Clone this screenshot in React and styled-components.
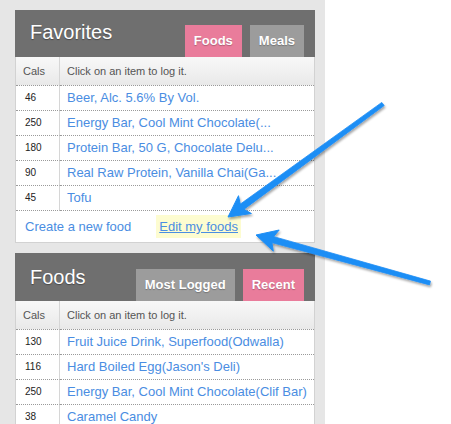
import React from "react";
import styled, { createGlobalStyle } from "styled-components";

const Global = createGlobalStyle`
  html, body { margin: 0; padding: 0; background: #ffffff; }
  body { font-family: "Liberation Sans", Arial, sans-serif; }
`;

const Page = styled.div`
  position: relative;
  width: 451px;
  height: 424px;
  overflow: hidden;
`;

const Sidebar = styled.div`
  width: 325px;
  height: 424px;
  box-sizing: border-box;
  background: #e6e6e6;
  padding: 10px 10px 0 15px;
  display: flex;
  flex-direction: column;
  gap: 10px;
`;

const Panel = styled.section`
  background: #ffffff;
  border: 1px solid #d2d2d2;
  border-top: none;
  display: flex;
  flex-direction: column;
`;

const Header = styled.div`
  background: #6f6f6f;
  height: ${(p) => p.$h}px;
  display: flex;
  align-items: flex-end;
  padding: 0 11px 0 15px;
  margin: 0 -1px;
`;

const Title = styled.h2`
  margin: 0;
  align-self: flex-start;
  margin-top: ${(p) => p.$top}px;
  font-size: 20px;
  font-weight: normal;
  color: #ffffff;
  text-shadow: 0 1px 1px rgba(0, 0, 0, 0.35);
  flex: 1;
`;

const Tabs = styled.div`
  display: flex;
  gap: 8px;
`;

const Tab = styled.div`
  height: 32px;
  line-height: 32px;
  padding: 0 ${(p) => p.$pad}px;
  background: ${(p) => (p.$active ? "#e97c9b" : "#9c9c9c")};
  color: #ffffff;
  font-size: 13px;
  font-weight: bold;
  text-shadow: 0 1px 1px rgba(0, 0, 0, 0.25);
`;

const Table = styled.div`
  display: grid;
  grid-template-columns: 44px 1fr;
`;

const HeadCell = styled.div`
  height: 28px;
  line-height: 28px;
  background: linear-gradient(#f8f8f8, #e9e9e9);
  border-bottom: 1px dotted #9a9a9a;
  border-right: ${(p) => (p.$first ? "1px solid #d6d6d6" : "none")};
  padding-left: 7px;
  font-size: 11px;
  color: #555555;
`;

const CalCell = styled.div`
  height: 24px;
  line-height: 24px;
  border-bottom: 1px dotted #9a9a9a;
  border-right: 1px solid #d6d6d6;
  padding-left: 9px;
  font-size: 10px;
  color: #222222;
`;

const NameCell = styled.a`
  display: block;
  height: 24px;
  line-height: 24px;
  border-bottom: 1px dotted #9a9a9a;
  padding-left: 7px;
  font-size: 13px;
  color: #4a8de2;
  text-decoration: none;
  white-space: nowrap;
  overflow: hidden;
`;

const Footer = styled.div`
  height: 31px;
  display: flex;
  align-items: center;
  padding-left: 9px;
  gap: 28px;
`;

const FootLink = styled.a`
  font-size: 13px;
  color: #4a8de2;
  text-decoration: ${(p) => (p.$hl ? "underline" : "none")};
  background: ${(p) => (p.$hl ? "#fdfcd0" : "transparent")};
  padding: ${(p) => (p.$hl ? "4px 3px" : "0")};
  margin-left: ${(p) => (p.$hl ? "-3px" : "0")};
`;

const Overlay = styled.svg`
  position: absolute;
  left: 0;
  top: 0;
  pointer-events: none;
`;

const favorites = [
  ["46", "Beer, Alc. 5.6% By Vol."],
  ["250", "Energy Bar, Cool Mint Chocolate(..."],
  ["180", "Protein Bar, 50 G, Chocolate Delu..."],
  ["90", "Real Raw Protein, Vanilla Chai(Ga..."],
  ["45", "Tofu"],
];

const foods = [
  ["130", "Fruit Juice Drink, Superfood(Odwalla)"],
  ["116", "Hard Boiled Egg(Jason's Deli)"],
  ["250", "Energy Bar, Cool Mint Chocolate(Clif Bar)"],
  ["38", "Caramel Candy"],
];

function Rows({ items }) {
  return (
    <Table>
      <HeadCell $first>Cals</HeadCell>
      <HeadCell>Click on an item to log it.</HeadCell>
      {items.map(([c, n], i) => (
        <React.Fragment key={i}>
          <CalCell>{c}</CalCell>
          <NameCell href="#">{n}</NameCell>
        </React.Fragment>
      ))}
    </Table>
  );
}

function arrowPoints(sx, sy, tx, ty, headLen, halfW, w0, w1, notch) {
  const dx = tx - sx;
  const dy = ty - sy;
  const L = Math.hypot(dx, dy);
  const ux = dx / L;
  const uy = dy / L;
  const nx = -uy;
  const ny = ux;
  const bx = tx - ux * headLen;
  const by = ty - uy * headLen;
  const nxp = bx + ux * notch;
  const nyp = by + uy * notch;
  const shaft = [
    [sx + nx * w0, sy + ny * w0],
    [nxp + nx * w1, nyp + ny * w1],
    [nxp - nx * w1, nyp - ny * w1],
    [sx - nx * w0, sy - ny * w0],
  ];
  const head = [
    [tx, ty],
    [bx + nx * halfW, by + ny * halfW],
    [nxp, nyp],
    [bx - nx * halfW, by - ny * halfW],
  ];
  const f = (pts) => pts.map((p) => p.map((v) => v.toFixed(1)).join(",")).join(" ");
  return { shaft: f(shaft), head: f(head) };
}

function Arrow({ sx, sy, tx, ty }) {
  const a = arrowPoints(sx, sy, tx, ty, 21, 11, 2, 3.2, 5);
  return (
    <g filter="url(#shadow)">
      <polygon points={a.shaft} fill="#1f8ef5" strokeLinejoin="round" stroke="#1f8ef5" strokeWidth="0.8" />
      <polygon points={a.head} fill="#1f8ef5" strokeLinejoin="round" stroke="#1f8ef5" strokeWidth="1" />
    </g>
  );
}

export default function App() {
  return (
    <Page>
      <Global />
      <Sidebar>
        <Panel>
          <Header $h={47}>
            <Title $top={11}>Favorites</Title>
            <Tabs>
              <Tab $active $pad={9}>Foods</Tab>
              <Tab $pad={9}>Meals</Tab>
            </Tabs>
          </Header>
          <Rows items={favorites} />
          <Footer>
            <FootLink href="#">Create a new food</FootLink>
            <FootLink href="#" $hl>Edit my foods</FootLink>
          </Footer>
        </Panel>
        <Panel>
          <Header $h={48}>
            <Title $top={13}>Foods</Title>
            <Tabs>
              <Tab $pad={9}>Most Logged</Tab>
              <Tab $active $pad={9}>Recent</Tab>
            </Tabs>
          </Header>
          <Rows items={foods} />
        </Panel>
      </Sidebar>
      <Overlay width="451" height="424" viewBox="0 0 451 424">
        <defs>
          <filter id="shadow" x="-20%" y="-20%" width="140%" height="140%">
            <feDropShadow dx="1" dy="2" stdDeviation="1.2" floodColor="#000" floodOpacity="0.35" />
          </filter>
        </defs>
        <Arrow sx={383} sy={104} tx={228} ty={217} />
        <Arrow sx={430} sy={283} tx={256} ty={235} />
      </Overlay>
    </Page>
  );
}
